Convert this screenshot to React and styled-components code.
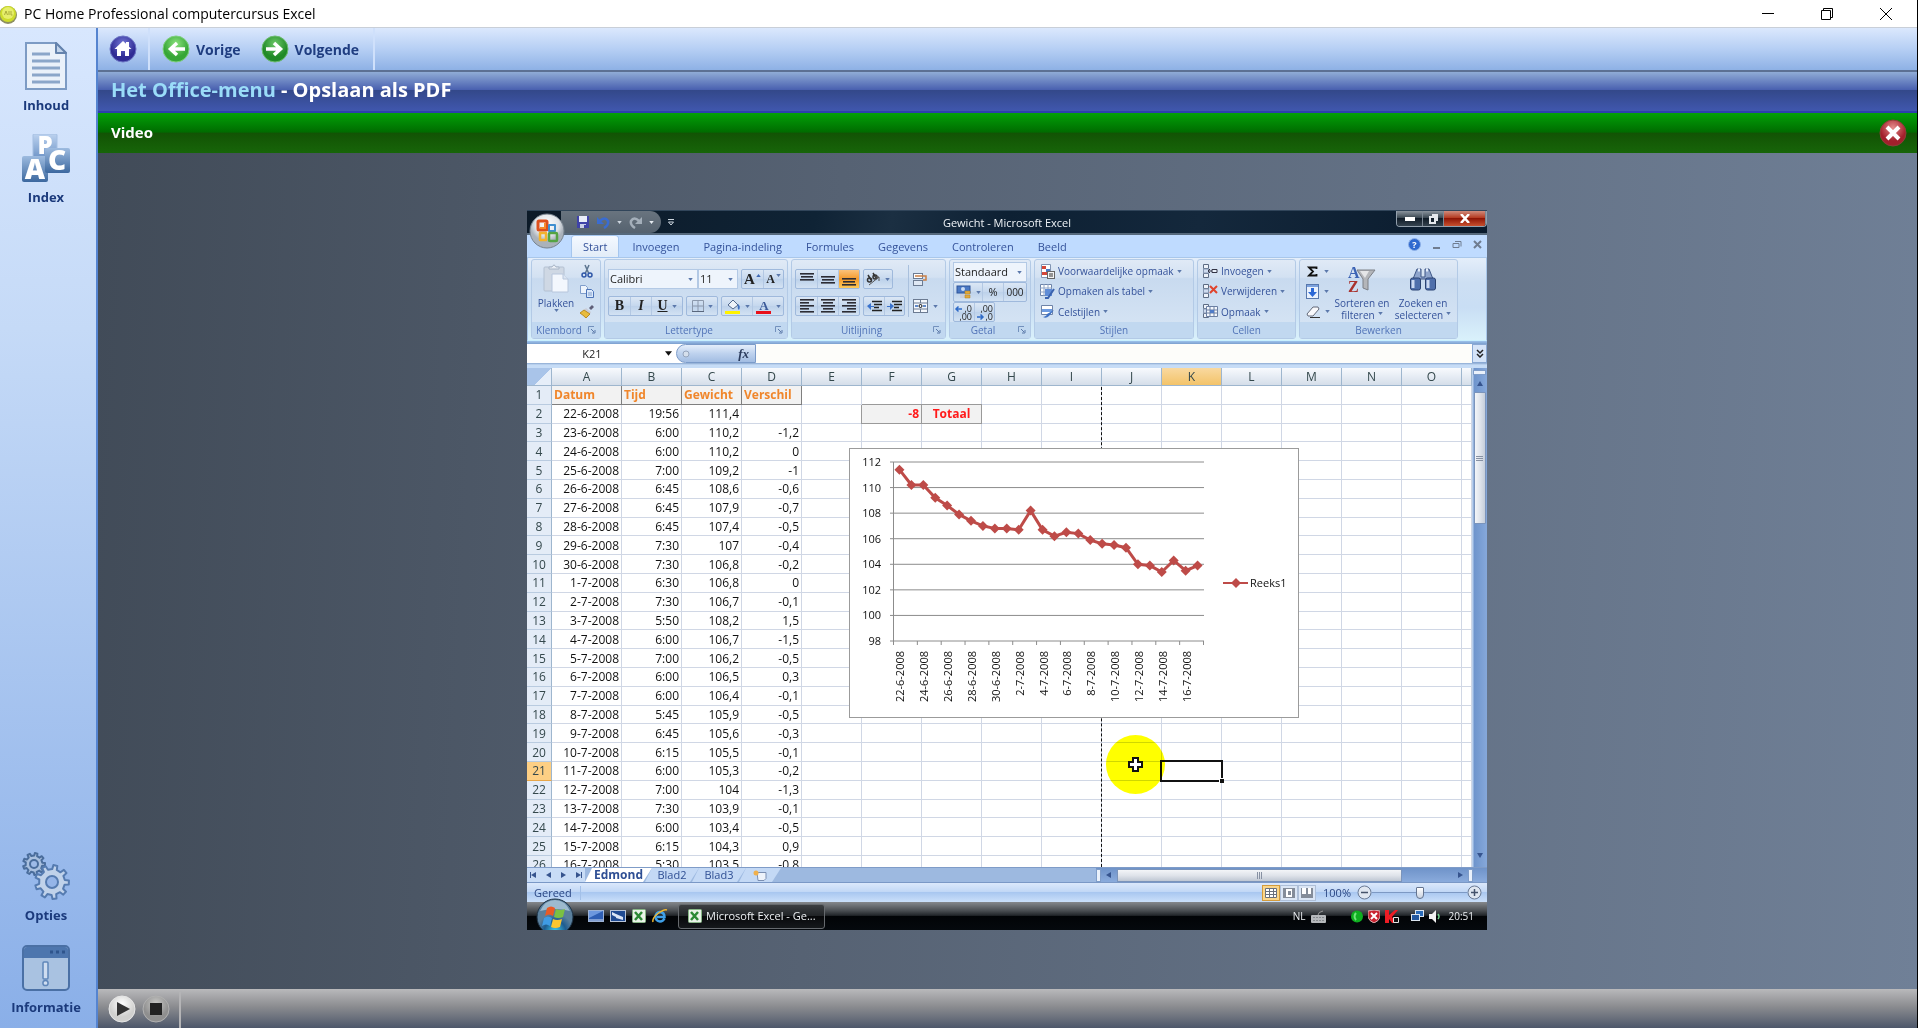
import React from 'react';
import styled, { createGlobalStyle, css } from 'styled-components';

const GlobalStyle = createGlobalStyle`
  *, *::before, *::after {
    box-sizing: border-box;
  }
  body {
    margin: 0;
    font-family: "Open Sans", "Noto Sans", sans-serif;
  }
  button, input, select {
    font: inherit;
    color: inherit;
    margin: 0;
    padding: 0;
    border: 0;
    background: none;
  }
  svg {
    display: block;
    flex: none;
  }
`;

/* ---------- course player ---------- */

const Shell = styled.div`
  min-height: 100vh;
  display: flex;
  flex-direction: column;
  border-right: 1px solid #000;
  background: #fff;
`;

const TitleBar = styled.header`
  height: 28px;
  padding-right: 2px;
  display: flex;
  align-items: center;
  background: #fff;
  color: #000;
  border-bottom: 1px solid #c9cfd8;
`;

const AppTitle = styled.h1`
  flex: 1;
  margin: 0 0 0 6px;
  font-size: 14px;
  font-weight: 400;
  line-height: 20px;
`;

const WindowButton = styled.button`
  width: 59px;
  height: 27px;
  display: flex;
  align-items: center;
  justify-content: center;
`;

const Body = styled.div`
  flex: 1;
  display: flex;
`;

const Sidebar = styled.nav`
  width: 98px;
  padding: 14px 4px 12px 0;
  display: flex;
  flex-direction: column;
  justify-content: space-between;
  border-right: 2px solid #5584d0;
  background: linear-gradient(#d8e7fe, #c5daf7 30%, #8aafe8);
`;

const SideGroup = styled.div`
  display: flex;
  flex-direction: column;
  gap: 20px;
`;

const SideButton = styled.button`
  display: flex;
  flex-direction: column;
  align-items: center;
  gap: 6px;
  color: #1b3a7c;
  font-size: 13px;
  font-weight: 700;
  line-height: 18px;
`;

const Main = styled.main`
  flex: 1;
  min-width: 0;
  display: flex;
  flex-direction: column;
`;

const Toolbar = styled.div`
  height: 44px;
  display: flex;
  border-bottom: 2px solid #5c7093;
  background: linear-gradient(#dbe8fd, #b6cff4 50%, #8eb1e5);
`;

const ToolGroup = styled.div`
  display: flex;
  align-items: center;
  gap: 20px;
  padding: 0 ${p => p.$end}px 0 ${p => p.$start}px;
  border-right: 2px solid #cfe0fb;
`;

const ToolButton = styled.button`
  display: flex;
  align-items: center;
  gap: 6px;
  color: #1f3d80;
  font-size: 14px;
  font-weight: 700;
`;

const Heading = styled.h2`
  height: 41px;
  margin: 0;
  padding: 0 13px 4px;
  display: flex;
  align-items: center;
  font-size: 20px;
  font-weight: 700;
  white-space: pre;
  color: #fff;
  border-bottom: 2px solid #2c3fae;
  background: linear-gradient(#90acd6, #4a61b0 45%, #334889 46%, #4057ae);

  span {
    color: #9adcf8;
  }
`;

const VideoBar = styled.div`
  height: 40px;
  padding: 0 10px 0 13px;
  display: flex;
  align-items: center;
  justify-content: space-between;
  color: #fff;
  background: linear-gradient(#02a108, #006c00 48%, #125304 50%, #176509);
`;

const VideoTitle = styled.h3`
  margin: 0;
  padding-bottom: 2px;
  font-size: 15px;
  font-weight: 700;
`;

const Stage = styled.section`
  flex: 1;
  padding: 0 1px 2px 0;
  display: flex;
  align-items: center;
  justify-content: center;
  background: linear-gradient(93deg, #414b58, #566273 40%, #708097);
`;

const PlayerBar = styled.footer`
  height: 39px;
  padding-left: 10px;
  display: flex;
  align-items: center;
  gap: 6px;
  background: linear-gradient(#b9b9bb, #8b8c90 45%, #4d576a);
`;

const PlayerDivider = styled.span`
  width: 2px;
  height: 36px;
  margin: 3px 0 0 3px;
  background: #b4b4b6;
`;

/* ---------- Excel window ---------- */

const Screen = styled.div`
  width: 960px;
  overflow: hidden;
  position: relative;
  background: #fff;
  font-size: 11px;
  line-height: 14px;
  font-weight: 500;
  color: #34529a;
`;

const ExcelTitle = styled.div`
  height: 25px;
  display: grid;
  grid-template-columns: 1fr auto 1fr;
  align-items: start;
  border-top: 1px solid #31455a;
  border-bottom: 2px solid #56697c;
  background: linear-gradient(100deg, #0c1a28, #0f2335 30%, #1b2f42 38%, #0d2033 50%, #14283c 70%, #0a1b2d);
`;

const QuickAccess = styled.div`
  display: flex;
  align-items: center;
  height: 22px;
  color: #dbe4ee;
`;

const QuickPill = styled.div`
  width: 100px;
  height: 22px;
  margin: 0 7px 0 34px;
  padding-left: 15px;
  display: flex;
  align-items: center;
  gap: 7px;
  border-radius: 0 11px 11px 0;
  background: linear-gradient(#69747f, #55626f);
`;

const ExcelName = styled.div`
  padding-top: 5px;
  font-size: 11px;
  color: #eef2f6;
`;

const WindowKeys = styled.div`
  justify-self: end;
  display: flex;
  border: 1px solid #93a0ad;
  border-top: 0;
  border-radius: 0 0 4px 4px;
  overflow: hidden;
`;

const WindowKey = styled.button`
  width: ${p => p.$w}px;
  height: 15px;
  display: flex;
  align-items: center;
  justify-content: center;
  border-right: 1px solid #7c8894;
  background: ${p => (p.$close
    ? 'linear-gradient(#d08b7b, #b53b22 45%, #8f1606 50%, #c8502f)'
    : 'linear-gradient(#8a949d, #3a4752 45%, #101c28 50%, #35434f)')};
`;

const OfficeButton = styled.button`
  position: absolute;
  left: 2px;
  top: 3px;
`;

const TabStrip = styled.div`
  height: 22px;
  padding-left: 45px;
  display: flex;
  align-items: flex-end;
  background: #bfdbff;
`;

const RibbonTab = styled.button`
  height: 21px;
  padding: 0 ${p => (p.$active ? 11 : 12)}px;
  margin-right: ${p => (p.$active ? 2 : 0)}px;
  border-radius: 3px 3px 0 0;
  ${p => p.$active && css`
    background: linear-gradient(#f4f9ff, #e2ecf8);
    box-shadow: 0 0 0 1px #a5c6ee;
  `}
`;

const TabTools = styled.div`
  flex: 1;
  height: 22px;
  padding: 0 5px 3px 0;
  display: flex;
  align-items: center;
  justify-content: flex-end;
  gap: 11px;

  button {
    display: flex;
  }
`;

const Ribbon = styled.div`
  height: 84px;
  padding: 1px 3px;
  display: flex;
  gap: 3px;
  border: 1px solid #a9c7ea;
  border-bottom-color: #c8f0ff;
  background: linear-gradient(#e4eefa, #cddff3 30%, #c9def4 60%, #d9f1fb);
  font-size: 10px;
`;

const Group = styled.section`
  width: ${p => p.$w}px;
  height: 80px;
  display: flex;
  flex-direction: column;
  border: 1px solid #b3cae6;
  border-radius: 3px;
  background: linear-gradient(#e0eaf6, #d3e1f2 22%, #c8daef 24%, #d8e6f5);
`;

const GroupBody = styled.div`
  flex: 1;
  min-height: 0;
  display: flex;
  padding: ${p => p.$pad};
  gap: ${p => p.$gap || 0}px;
`;

const GroupLabel = styled.div`
  height: 16px;
  padding: 0 4px;
  display: flex;
  align-items: center;
  gap: 6px;
  color: #5274b8;
  background: #c1d8f0;

  span {
    flex: 1;
    text-align: center;
  }
`;

const Stack = styled.div`
  display: flex;
  flex-direction: column;
  gap: ${p => p.$gap || 0}px;
`;

const Line = styled.div`
  display: flex;
  gap: ${p => p.$gap || 0}px;
`;

const BigButton = styled.button`
  width: ${p => p.$w}px;
  padding-top: ${p => p.$top || 0}px;
  display: flex;
  flex-direction: column;
  align-items: center;
  justify-content: flex-start;
  line-height: 12px;

  svg:first-child {
    margin-bottom: 4px;
  }
`;

const WithCaret = styled.span`
  display: flex;
  align-items: center;
  gap: 3px;
`;

const TextButton = styled.button`
  height: 21px;
  display: flex;
  align-items: center;
  gap: 3px;
  white-space: nowrap;
`;

const IconButton = styled.button`
  height: ${p => p.$h || 21}px;
  display: flex;
  align-items: center;
  gap: 5px;
`;

const KeyGroup = styled.div`
  height: 20px;
  display: flex;
  border: 1px solid #9fb9dc;
  border-radius: 2px;
  background: linear-gradient(#dbe7f5, #c6d8ee 48%, #bcd1ea 50%, #d3e2f3);
`;

const Key = styled.button`
  width: ${p => p.$w}px;
  display: flex;
  align-items: center;
  justify-content: center;
  gap: ${p => (p.$raised ? 1 : 4)}px;
  color: #222;
  font-family: ${p => (p.$serif ? '"Liberation Serif", serif' : 'inherit')};
  font-size: ${p => p.$size || 11}px;
  font-weight: ${p => (p.$bold ? 700 : 500)};
  font-style: ${p => (p.$italic ? 'italic' : 'normal')};
  background: ${p => (p.$on ? 'linear-gradient(#fbc27b, #f59a2c 50%, #fdc95a)' : 'none')};

  & + & {
    border-left: 1px solid #b3c8e3;
  }

  ${p => p.$raised && css`
    svg {
      align-self: flex-start;
      margin-top: 4px;
    }
  `}
`;

const ComboFrame = styled.span`
  width: ${p => p.$w}px;
  height: 20px;
  padding-right: 4px;
  display: flex;
  align-items: center;
  border: 1px solid #b3c9e5;
  background: #eef4fc;
  color: #1e1e1e;
  font-size: 11px;

  select {
    flex: 1;
    min-width: 0;
    padding-left: 1px;
    appearance: none;
    outline: none;
  }
`;

const Separator = styled.span`
  width: 1px;
  height: 52px;
  margin: -4px 4px 0 3px;
  background: #a9c0dd;
`;

const FormulaBar = styled.div`
  height: 27px;
  padding: 3px 0 5px;
  display: flex;
  background: linear-gradient(#9ec3ec, #7b9fce 3px, #fff 3px, #fff 22px, #8aa8d0 22px, #c6dcf6 24px);
`;

const NameBox = styled.label`
  width: 149px;
  padding: 0 4px 0 0;
  display: flex;
  align-items: center;
  background: #fff;
  color: #222;

  input {
    flex: 1;
    min-width: 0;
    height: 19px;
    padding-right: 8px;
    text-align: center;
    outline: none;
  }
`;

const FxPill = styled.div`
  width: 80px;
  padding: 0 6px 0 5px;
  display: flex;
  align-items: center;
  justify-content: space-between;
  border: 1px solid #7b9bc9;
  border-radius: 10px 0 0 10px;
  background: linear-gradient(#e4eefb, #bed2ee 50%, #a2bde2);
  color: #2b3c5d;
  font: italic 700 13px "Liberation Serif", serif;
`;

const FormulaInput = styled.input`
  flex: 1;
  min-width: 0;
  padding: 0 4px;
  background: #fdfdfa;
  outline: none;
`;

const ExpandButton = styled.button`
  width: 15px;
  display: flex;
  align-items: center;
  justify-content: center;
  border: 1px solid #8aa9d4;
  background: #d5e4f8;
`;

const SheetArea = styled.div`
  height: 499px;
  display: flex;
  overflow: hidden;
`;

const Canvas = styled.div`
  flex: 1;
  min-width: 0;
  position: relative;
  overflow: hidden;
`;

const Grid = styled.table`
  width: 945px;
  height: 507px;
  table-layout: fixed;
  border-collapse: separate;
  border-spacing: 0;
  color: #111;
  font-size: 12px;
  line-height: 17px;
`;

const ColumnHead = styled.th`
  padding: 0;
  font-weight: 500;
  color: #34484c;
  border-right: 1px solid #9eb6ce;
  border-bottom: 1px solid #9eb6ce;
  background: ${p => (p.$on
    ? 'linear-gradient(#f9d9a0, #f3c369)'
    : 'linear-gradient(#f8fafd, #e6ecf4 50%, #d5dee9)')};
`;

const Corner = styled.td`
  padding: 0;
  border-right: 1px solid #9eb6ce;
  border-bottom: 1px solid #9eb6ce;
  background: linear-gradient(135deg, #a9c4e9 60%, #e6eef9 61%);
`;

const RowHead = styled.th`
  padding: 0;
  font-weight: 500;
  color: #34484c;
  border-right: 1px solid #9eb6ce;
  border-bottom: 1px solid ${p => (p.$on ? '#e8a648' : '#b9cbe0')};
  background: ${p => (p.$on ? '#fdcf84' : '#e4ecf7')};
`;

const Cell = styled.td`
  padding: 0 2px;
  text-align: right;
  white-space: nowrap;
  border-right: 1px solid #d0d7e5;
  border-bottom: 1px solid #d0d7e5;
  background: #fff;
  ${p => p.$kind === 'title' && css`
    padding: 0 0 0 2px;
    text-align: left;
    font-weight: 700;
    color: #f0862b;
    background: #f2f2f2;
    border-color: #7f7f7f;
  `}
  ${p => p.$kind === 'total' && css`
    font-weight: 700;
    color: #ff1a1a;
    background: #f2f2f2;
    border-color: #9a9a9a;
    box-shadow: 0 -1px 0 #9a9a9a, -1px 0 0 #9a9a9a;
  `}
  ${p => p.$center && css`
    text-align: center;
  `}
`;

const PageBreak = styled.div`
  position: absolute;
  left: 574px;
  top: 19px;
  bottom: 0;
  border-left: 1px dashed #111;
`;

const ChartBox = styled.figure`
  position: absolute;
  left: 322px;
  top: 80px;
  margin: 0;
  border: 1px solid #9b9b9b;
  background: #fff;
`;

const Pointer = styled.div`
  position: absolute;
  left: 579px;
  top: 367px;
  width: 59px;
  height: 59px;
  border-radius: 50%;
  background: #ff0;
  mix-blend-mode: multiply;
`;

const PointerMark = styled.div`
  position: absolute;
  left: 600px;
  top: 388px;
`;

const Selection = styled.div`
  position: absolute;
  left: 633px;
  top: 392px;
  width: 63px;
  height: 22px;
  border: 2px solid #111;

  &::after {
    content: '';
    position: absolute;
    right: -3px;
    bottom: -3px;
    width: 5px;
    height: 5px;
    border: 1px solid #fff;
    border-width: 1px 0 0 1px;
    background: #111;
  }
`;

const ScrollColumn = styled.div`
  width: 15px;
  padding: 2px 1px 4px;
  display: flex;
  flex-direction: column;
  align-items: center;
  background: linear-gradient(90deg, #b9cfec 1px, #6e94cc 2px, #86a8da);
`;

const SplitKnob = styled.span`
  width: ${p => (p.$tall ? 5 : 13)}px;
  height: ${p => (p.$tall ? 13 : 5)}px;
  border: 1px solid #7f9dc9;
  background: #eaf1fb;
`;

const ScrollThumb = styled.div`
  width: 12px;
  height: 132px;
  margin-bottom: auto;
  display: flex;
  align-items: center;
  justify-content: center;
  border: 1px solid #7b94bb;
  border-radius: 1px;
  background: linear-gradient(90deg, #f3f5f8, #dfe4ec 50%, #c6ceda);
`;

const ScrollButton = styled.button`
  width: 12px;
  height: ${p => (p.$flat ? 14 : 17)}px;
  display: flex;
  align-items: center;
  justify-content: center;
`;

const SheetBar = styled.div`
  height: 16px;
  display: flex;
  border-top: 1px solid #7f9cc8;
  border-bottom: 1px solid #7a98c6;
  background: #9db9e0;
`;

const SheetNav = styled.div`
  width: 58px;
  display: flex;
  align-items: center;
  justify-content: space-around;
  background: #c8dcf6;

  button {
    display: flex;
  }
`;

const SheetTab = styled.button`
  height: 14px;
  width: ${p => p.$w}px;
  display: flex;
  align-items: center;
  justify-content: center;
  font-size: ${p => (p.$on ? 12 : 11)}px;
  line-height: 12px;
  font-weight: ${p => (p.$on ? 700 : 500)};
  color: #2f4f94;
  clip-path: polygon(7px 0, 100% 0, calc(100% - 9px) 100%, 0 100%);
  margin-right: -7px;
  background: ${p => (p.$on ? '#fff' : '#c4d9f5')};
`;

const HorizontalScroll = styled.div`
  flex: 1;
  margin-left: auto;
  max-width: 391px;
  display: flex;
  align-items: center;
  justify-content: space-between;
  background: linear-gradient(#6f93c9, #8aabdc);
`;

const HorizontalThumb = styled.div`
  width: 285px;
  height: 13px;
  margin-right: 50px;
  display: flex;
  align-items: center;
  justify-content: center;
  border: 1px solid #7b94bb;
  background: linear-gradient(#f3f5f8, #dfe3ea 50%, #bfc7d3);
`;

const StatusBar = styled.div`
  height: 19px;
  padding: 0 5px 0 7px;
  display: flex;
  align-items: center;
  color: #294582;
  background: linear-gradient(#dbe8fb, #c2d8f6 45%, #a9c7f0 50%, #cbe0fa);
`;

const StatusText = styled.span`
  margin-right: auto;
  padding-right: 8px;
  border-right: 1px solid #a3c0e8;
`;

const ViewKeys = styled.div`
  height: 16px;
  margin-right: 7px;
  display: flex;
`;

const ViewKey = styled.button`
  width: 18px;
  display: flex;
  align-items: center;
  justify-content: center;
  border: 1px solid ${p => (p.$on ? '#d39b3c' : '#aebfd8')};
  background: ${p => (p.$on ? '#fbd68a' : '#dbe6f5')};
`;

const ZoomRange = styled.input`
  width: 95px;
  height: 15px;
  appearance: none;
  background: linear-gradient(#7d99c4, #7d99c4) center / 100% 1px no-repeat;

  &::-webkit-slider-thumb {
    appearance: none;
    width: 8px;
    height: 12px;
    border: 1px solid #64748f;
    border-radius: 1px 1px 4px 4px;
    background: linear-gradient(#fff, #c9d2e0);
  }
`;

const TaskBar = styled.div`
  height: 28px;
  padding: 0 13px 0 61px;
  display: flex;
  align-items: center;
  color: #eef1f4;
  background: linear-gradient(#85888c, #4c5054 30%, #22262a 48%, #020406 50%, #05090d);
`;

const QuickLaunch = styled.div`
  width: 90px;
  display: flex;
  gap: 6px;

  button {
    display: flex;
  }
`;

const TaskButton = styled.button`
  width: 147px;
  height: 25px;
  padding-left: 9px;
  display: flex;
  align-items: center;
  gap: 4px;
  border: 1px solid #666a6e;
  border-radius: 3px;
  background: linear-gradient(#3c3f42, #202326 48%, #08090b 50%, #15181b);
`;

const Tray = styled.div`
  margin-left: auto;
  display: flex;
  align-items: center;
  gap: 5px;
  font-size: 10px;
`;

const TrayGap = styled.span`
  width: ${p => p.$w}px;
`;

const Clock = styled.time`
  margin-left: 3px;
`;

const StartOrb = styled.button`
  position: absolute;
  left: 9px;
  bottom: 0;
  height: 32px;
  overflow: hidden;
`;

/* ---------- data ---------- */

const columns = 'ABCDEFGHIJKLMNO'.split('');

const log = [
    ['22-6-2008', '19:56', '111,4', ''],
    ['23-6-2008', '6:00', '110,2', '-1,2'],
    ['24-6-2008', '6:00', '110,2', '0'],
    ['25-6-2008', '7:00', '109,2', '-1'],
    ['26-6-2008', '6:45', '108,6', '-0,6'],
    ['27-6-2008', '6:45', '107,9', '-0,7'],
    ['28-6-2008', '6:45', '107,4', '-0,5'],
    ['29-6-2008', '7:30', '107', '-0,4'],
    ['30-6-2008', '7:30', '106,8', '-0,2'],
    ['1-7-2008', '6:30', '106,8', '0'],
    ['2-7-2008', '7:30', '106,7', '-0,1'],
    ['3-7-2008', '5:50', '108,2', '1,5'],
    ['4-7-2008', '6:00', '106,7', '-1,5'],
    ['5-7-2008', '7:00', '106,2', '-0,5'],
    ['6-7-2008', '6:00', '106,5', '0,3'],
    ['7-7-2008', '6:00', '106,4', '-0,1'],
    ['8-7-2008', '5:45', '105,9', '-0,5'],
    ['9-7-2008', '6:45', '105,6', '-0,3'],
    ['10-7-2008', '6:15', '105,5', '-0,1'],
    ['11-7-2008', '6:00', '105,3', '-0,2'],
    ['12-7-2008', '7:00', '104', '-1,3'],
    ['13-7-2008', '7:30', '103,9', '-0,1'],
    ['14-7-2008', '6:00', '103,4', '-0,5'],
    ['15-7-2008', '6:15', '104,3', '0,9'],
    ['16-7-2008', '5:30', '103,5', '-0,8'],
];

// the last point belongs to the row below the visible ones
const weights = [...log.map(r => parseFloat(r[2].replace(',', '.'))), 103.9];

/* ---------- icons ---------- */

const Caret = ({ color = '#5b78ab', size = 5 }) => (
    <svg width={size} height={size - 2} viewBox="0 0 6 4"><path d="M0 0h6L3 4z" fill={color} /></svg>
);

const CaretUp = () => (
    <svg width="5" height="3" viewBox="0 0 6 4"><path d="M0 4h6L3 0z" fill="#3f69b5" /></svg>
);

const Launcher = () => (
    <svg width="8" height="8" viewBox="0 0 8 8">
        <path d="M.5 6V.5H6" fill="none" stroke="#7391bd" />
        <path d="M3 3l3 3M7 4v3H4" fill="none" stroke="#5b78a8" />
    </svg>
);

const AppIcon = () => (
    <svg width="18" height="20" viewBox="0 0 18 20">
        <ellipse cx="8" cy="11" rx="9" ry="9" fill="#8d8f62" />
        <circle cx="8" cy="10" r="8" fill="#cddc2c" />
        <circle cx="8" cy="9" r="6" fill="#e6ee6b" />
        <path d="M4.5 11l1.500-4 1.500 4M9 7v4M11 7v4h1.500" fill="none" stroke="#aaac3c" />
    </svg>
);

const ContentsIcon = () => (
    <svg width="48" height="48" viewBox="0 0 48 48">
        <path d="M4 1h30l10 10v36H4z" fill="#eaf1fa" stroke="#7d9bc4" strokeWidth="2" />
        <path d="M34 1v10h10z" fill="#c3d5ec" stroke="#6583ad" strokeWidth="2" strokeLinejoin="round" />
        <path d="M10 12h18M10 19h28M10 26h28M10 33h28M10 40h28" stroke="#8ba6c9" strokeWidth="3" />
    </svg>
);

const IndexIcon = () => (
    <svg width="48" height="48" viewBox="0 0 48 48" fontFamily="'Open Sans', sans-serif" fontWeight="800" textAnchor="middle" fill="#fff">
        <defs>
            <linearGradient id="tile" x2="0" y2="1"><stop offset="0" stopColor="#9dbbe0" /><stop offset="1" stopColor="#3c689f" /></linearGradient>
            <linearGradient id="tileLight" x2="0" y2="1"><stop offset="0" stopColor="#bcd2ef" /><stop offset="1" stopColor="#6f95c8" /></linearGradient>
        </defs>
        <rect x="11" y="0" width="24" height="24" rx="1" fill="url(#tileLight)" stroke="#a5bfe2" />
        <text x="23" y="20" fontSize="24">P</text>
        <rect x="0" y="22" width="26" height="26" rx="2" fill="url(#tile)" />
        <text x="13" y="45" fontSize="28">A</text>
        <rect x="23" y="14" width="25" height="25" rx="2" fill="url(#tile)" />
        <text x="35" y="36" fontSize="28">C</text>
    </svg>
);

// outline of a cog with n teeth round (cx, cy)
const cog = (cx, cy, r, n) => {
    const pts = [];
    for (let i = 0; i < n; i++) {
        [[-0.26, 0.76], [-0.17, 1], [0.17, 1], [0.26, 0.76]].forEach(([a, k]) => {
            const t = ((i + a) / n) * Math.PI * 2 + 0.2;
            pts.push(`${(cx + Math.sin(t) * r * k).toFixed(1)},${(cy - Math.cos(t) * r * k).toFixed(1)}`);
        });
    }
    return pts.join(' ');
};

const OptionsIcon = () => (
    <svg width="48" height="48" viewBox="0 0 48 48" strokeLinejoin="round">
        <polygon points={cog(12, 12, 11, 9)} fill="#a9c0df" stroke="#4a6d9c" strokeWidth="2" />
        <circle cx="12" cy="12" r="4" fill="#9ebbe8" stroke="#4a6d9c" strokeWidth="2" />
        <polygon points={cog(30, 30, 17, 9)} fill="#c0d2ea" stroke="#557bb0" strokeWidth="2" />
        <circle cx="30" cy="30" r="6" fill="#95b5e8" stroke="#557bb0" strokeWidth="2" />
    </svg>
);

const InfoIcon = () => (
    <svg width="48" height="48" viewBox="0 0 48 48">
        <rect x="1" y="2" width="46" height="44" rx="4" fill="#a9c2e1" stroke="#4a70a5" strokeWidth="2" />
        <path d="M2 14V6q0-3 3-3h38q3 0 3 3v8z" fill="#4d76ae" />
        <path d="M28 8h3M34 8h3M40 8h3" stroke="#2f558c" strokeWidth="3" />
        <rect x="21" y="18" width="5" height="17" rx="1" fill="#cfddf0" stroke="#5f86b9" strokeWidth="1.5" />
        <circle cx="23.5" cy="39" r="2.6" fill="#cfddf0" stroke="#5f86b9" strokeWidth="1.5" />
    </svg>
);

const RoundIcon = ({ from, to, ring, children }) => (
    <svg width="28" height="28" viewBox="0 0 28 28">
        <defs>
            <radialGradient id={`r${to.slice(1)}`} cy="0.3"><stop offset="0" stopColor={from} /><stop offset="1" stopColor={to} /></radialGradient>
        </defs>
        <circle cx="14" cy="14" r="13" fill={`url(#r${to.slice(1)})`} stroke={ring} />
        {children}
    </svg>
);

const HomeIcon = () => (
    <RoundIcon from="#7479d6" to="#302c95" ring="#6b74c4">
        <path d="M5.5 14L14 6l3 2.800V7h3v4.700l2.500 2.300h-2.500v7h-4v-5h-4v5H8v-7z" fill="#fff" />
    </RoundIcon>
);

const PrevIcon = () => (
    <RoundIcon from="#8be27d" to="#36a637" ring="#7ecf7c">
        <path d="M15 8l-6.500 6 6.500 6M9 14h14" fill="none" stroke="#fff" strokeWidth="3.5" />
    </RoundIcon>
);

const NextIcon = () => (
    <RoundIcon from="#6cc868" to="#218a28" ring="#6dbb6e">
        <path d="M13 8l6.500 6-6.500 6M19 14H5" fill="none" stroke="#fff" strokeWidth="3.5" />
    </RoundIcon>
);

const CloseIcon = () => (
    <RoundIcon from="#e58c8c" to="#a3202c" ring="#8c4038">
        <path d="M8 8l12 12M20 8L8 20" stroke="#fff" strokeWidth="4" />
    </RoundIcon>
);

const PlayIcon = () => (
    <RoundIcon from="#ffffff" to="#d0d0ce" ring="#e6e6e6">
        <path d="M9 7l13 7-13 7z" fill="#333" />
    </RoundIcon>
);

const StopIcon = () => (
    <RoundIcon from="#c9c9c7" to="#8f8f8f" ring="#b1b1b1">
        <rect x="8" y="8" width="12" height="12" fill="#222" />
    </RoundIcon>
);

const OfficeIcon = () => (
    <svg width="36" height="36" viewBox="0 0 36 36">
        <defs>
            <radialGradient id="orbWhite" cy="0.3"><stop offset="0" stopColor="#fff" /><stop offset=".7" stopColor="#dfe3e8" /><stop offset="1" stopColor="#aab2bb" /></radialGradient>
        </defs>
        <circle cx="18" cy="18" r="17" fill="url(#orbWhite)" stroke="#76828e" />
        <g fill="none" strokeWidth="3" strokeLinejoin="round">
            <rect x="9" y="8" width="9" height="9" rx="1" stroke="#dd4f1d" />
            <rect x="20" y="12" width="6" height="6" stroke="#3f8fd0" strokeWidth="2" />
            <rect x="11" y="20" width="6" height="7" stroke="#f3b22c" strokeWidth="2.5" />
            <rect x="20" y="20" width="8" height="8" rx="1" stroke="#55a443" strokeWidth="2.5" />
        </g>
        <path d="M16 10v5h-5" stroke="#f58a2c" strokeWidth="2" fill="none" />
    </svg>
);

const SaveIcon = () => (
    <svg width="14" height="14" viewBox="0 0 14 14">
        <path d="M1 1h12v12H1z" fill="#3f43a8" />
        <path d="M3 1h8v6H3z" fill="#e9edf8" />
        <path d="M4 9h6v4H4z" fill="#c9cfe8" />
        <path d="M8 10h2v3H8z" fill="#3f43a8" />
    </svg>
);

const UndoIcon = ({ flip, color }) => (
    <svg width="13" height="13" viewBox="0 0 13 13">
        <g transform={flip ? 'translate(13 0) scale(-1 1)' : undefined}>
            <path d="M3 5q5-5 8 0 1 4-4 7" fill="none" stroke={color} strokeWidth="2.5" />
            <path d="M0 1v7h7z" fill={color} />
        </g>
    </svg>
);

const PasteIcon = () => (
    <svg width="26" height="29" viewBox="0 0 26 29">
        <rect x="1" y="3" width="20" height="24" rx="1" fill="#cfd8e4" stroke="#b4c1d2" />
        <path d="M6 5V3h3q2-4 4 0h3v2z" fill="#e9eef5" stroke="#a7b4c6" />
        <path d="M9 10h11l5 5v13H9z" fill="#f3f7fd" stroke="#b7c6dc" />
        <path d="M20 10v5h5" fill="#dbe5f2" stroke="#b7c6dc" />
    </svg>
);

const CutIcon = () => (
    <svg width="14" height="14" viewBox="0 0 14 14" fill="none">
        <path d="M5 1l4 9M9 1L5 10" stroke="#5c7590" strokeWidth="1.5" />
        <circle cx="4" cy="11" r="2" stroke="#2f57a8" strokeWidth="1.5" />
        <circle cx="10" cy="11" r="2" stroke="#2f57a8" strokeWidth="1.5" />
    </svg>
);

const CopyIcon = () => (
    <svg width="14" height="13" viewBox="0 0 14 13">
        <path d="M.5.5h5l2 2v6h-7z" fill="#eef4fc" stroke="#7f9dcb" />
        <path d="M6.5 4.5h5l2 2v6h-7z" fill="#dbe8fa" stroke="#4c74b8" />
        <path d="M8 8h4M8 10h4" stroke="#7f9dcb" />
    </svg>
);

const BrushIcon = () => (
    <svg width="14" height="14" viewBox="0 0 14 14">
        <path d="M9 4l3-3 2 2-3 3z" fill="#5f5f78" />
        <path d="M6 4l5 4-1 2-6-4z" fill="#c9cbd6" />
        <path d="M4 6l6 4-4 4Q3 11 0 9z" fill="#e8bb3c" stroke="#b98a22" />
    </svg>
);

const BordersIcon = () => (
    <svg width="12" height="12" viewBox="0 0 12 12" fill="none">
        <path d="M.5.5h11v11H.5zM6 .5v11M.5 6h11" stroke="#8b98ac" />
        <path d="M0 11.5h12" stroke="#59677d" />
    </svg>
);

const FillIcon = () => (
    <svg width="16" height="15" viewBox="0 0 16 15">
        <path d="M3 6l5-5 5 5-5 4z" fill="#eef3fa" stroke="#52698d" />
        <path d="M13 5q3 2 1 6-2-1-1-6z" fill="#3c6fc0" />
        <rect y="12" width="15" height="3" fill="#fff200" />
    </svg>
);

const FontColorIcon = () => (
    <svg width="16" height="15" viewBox="0 0 16 15">
        <text x="8" y="11" fontSize="13" fontWeight="700" textAnchor="middle" fill="#3b5a99" fontFamily="'Liberation Serif', serif">A</text>
        <rect y="12" width="15" height="3" fill="#e8101a" />
    </svg>
);

const LinesIcon = ({ rows }) => (
    <svg width="14" height="14" viewBox="0 0 14 14">
        {rows.map(([y, x, w]) => <rect key={y} x={x} y={y} width={w} height="1.6" fill="#2c2c34" />)}
    </svg>
);

const AngleIcon = () => (
    <svg width="15" height="14" viewBox="0 0 15 14">
        <path d="M2 3l3 5M7 1l3 5" stroke="#333" strokeWidth="1.5" />
        <circle cx="3.5" cy="8" r="2" fill="none" stroke="#333" strokeWidth="1.5" />
        <circle cx="9" cy="5" r="2" fill="none" stroke="#333" strokeWidth="1.5" />
        <path d="M3 13L13 5M13 5v4M13 5H9" stroke="#555" fill="none" />
    </svg>
);

const IndentIcon = ({ right }) => (
    <svg width="15" height="13" viewBox="0 0 15 13">
        <path d="M5 1.5h10M7 4.5h8M7 7.5h5M5 10.5h10" stroke="#222" strokeWidth="1.5" />
        <path d={right ? 'M0 6h3V3l4 3-4 4V7H0z' : 'M7 6H4V3L0 6l4 4V7h3z'} fill="#3a73cd" />
    </svg>
);

const WrapIcon = () => (
    <svg width="15" height="15" viewBox="0 0 15 15">
        <rect x=".5" y="1.5" width="9" height="5" fill="#fff" stroke="#6c7b92" />
        <rect x=".5" y="8.5" width="9" height="5" fill="#dfe8f4" stroke="#6c7b92" />
        <path d="M2 4h11v4h-3" fill="none" stroke="#c97f45" strokeWidth="1.5" />
    </svg>
);

const MergeIcon = () => (
    <svg width="15" height="14" viewBox="0 0 15 14">
        <rect x=".5" y=".5" width="14" height="13" fill="#f4f8fd" stroke="#6c7b92" />
        <path d="M.5 4h14M.5 10h14M7.5 0v4M7.5 10v4" stroke="#6c7b92" />
        <path d="M2 7h3M10 7h3" stroke="#2f64b8" strokeWidth="1.5" />
        <circle cx="7.5" cy="7" r="1.5" fill="none" stroke="#111" />
    </svg>
);

const MoneyIcon = () => (
    <svg width="16" height="14" viewBox="0 0 16 14">
        <rect x="1" y="1" width="13" height="7" fill="#4a78c4" stroke="#2e549a" />
        <circle cx="7" cy="4" r="2" fill="#c9dcf6" />
        <path d="M4 9h6v4H4z" fill="#c9cedb" />
        <path d="M9 6h5v3H9zM9 10h5v3H9z" fill="#e2a93b" stroke="#b07c1e" strokeWidth=".5" />
    </svg>
);

const DecimalIcon = ({ top, bottom, left }) => (
    <svg width="18" height="17" viewBox="0 0 18 17" fontSize="9" fill="#222" overflow="visible">
        <text x="17" y="8" textAnchor="end">{top}</text>
        <text x="17" y="16" textAnchor="end">{bottom}</text>
        <path d={left ? 'M7 5H1M3.5 2.5L1 5l2.500 2.500' : 'M1 13h6M4.5 10.5L7 13l-2.500 2.500'} stroke="#2f6bc8" strokeWidth="1.5" fill="none" />
    </svg>
);

const ConditionIcon = () => (
    <svg width="15" height="15" viewBox="0 0 15 15">
        <path d="M1.5.5h9v13h-9z" fill="#fff" stroke="#8194b3" />
        <path d="M2 2h4v3H2zM2 8h5v3H2z" fill="#d4473a" />
        <path d="M6 5h4v3H6z" fill="#4b79c5" />
        <rect x="7.5" y="7.5" width="7" height="7" fill="#f4f4f4" stroke="#666" />
        <path d="M9 10h4M9 12h4" stroke="#333" />
    </svg>
);

const TableIcon = () => (
    <svg width="15" height="15" viewBox="0 0 15 15">
        <path d="M.5.5h11v11H.5z" fill="#fff" stroke="#6d83a8" />
        <path d="M0 4h12M0 8h12M4 0v12M8 0v12" stroke="#8fa4c6" />
        <path d="M5 5h7v7H5z" fill="#5f8cd6" />
        <path d="M14 5L8 14 5 14" stroke="#3b63ae" strokeWidth="2" fill="none" />
    </svg>
);

const StylesIcon = () => (
    <svg width="15" height="15" viewBox="0 0 15 15">
        <path d="M1.5 1.5h11v9h-11z" fill="#fff" stroke="#6d83a8" />
        <path d="M2 5h10v3H2z" fill="#6d9be0" />
        <path d="M14 6L9 12q-3 3-6 1 4-1 4-3z" fill="#3d70c4" />
    </svg>
);

const CellsIcon = ({ kind }) => (
    <svg width="15" height="15" viewBox="0 0 15 15">
        <path d="M.5.5h5v4h-5zM.5 9.5h5v4h-5z" fill="#eef3fa" stroke="#5d6c84" />
        <path d="M.5 5h5v4h-5z" fill="#cfdcf0" stroke="#8798b3" />
        {kind === 'insert' && <path d="M9 5.5h5v3H9z" fill="#e9f0fa" stroke="#334" />}
        {kind === 'insert' && <path d="M5 7h4M7 5L5 7l2 2" fill="none" stroke="#334" />}
        {kind === 'delete' && <path d="M7 2l7 7M14 2L7 9" stroke="#e0432c" strokeWidth="2" />}
        {kind === 'format' && <path d="M3.5 2.5h11v10h-11zM3 6h11M3 9h11M7 3v9M11 3v9" fill="#f4f8fd" stroke="#6b7fa2" />}
        {kind === 'format' && <path d="M7 6h4v3H7z" fill="#4f7cc8" />}
    </svg>
);

const SumIcon = () => (
    <svg width="13" height="13" viewBox="0 0 13 13">
        <path d="M10.5 4V2.5H3L7 6.5 3 10.5h7.500V9" fill="none" stroke="#111" strokeWidth="1.8" />
    </svg>
);

const DownIcon = () => (
    <svg width="13" height="15" viewBox="0 0 13 15">
        <rect x=".5" y=".5" width="12" height="14" fill="#eaf2fd" stroke="#5878ad" />
        <path d="M1 1h11v2H1z" fill="#7da2dd" />
        <path d="M5 4h3v4h3l-4.500 5L2 8h3z" fill="#2b68d6" />
    </svg>
);

const EraserIcon = () => (
    <svg width="14" height="12" viewBox="0 0 14 12">
        <path d="M1 8l6-7h5l1 2-6 7H2z" fill="#f8f8fb" stroke="#646b7a" />
        <path d="M4 11.5h10" stroke="#333" />
    </svg>
);

const SortIcon = () => (
    <svg width="28" height="28" viewBox="0 0 28 28" fontFamily="'Liberation Serif', serif" fontWeight="700">
        <path d="M9 5h18l-7 9v11l-5-2v-9z" fill="#b4b6ba" stroke="#7d8087" />
        <path d="M12 6h9l-4 7z" fill="#e5e6e8" />
        <text x="0" y="13" fontSize="16" fill="#3c63b4">A</text>
        <text x="0" y="27" fontSize="16" fill="#a9322e">Z</text>
    </svg>
);

const FindIcon = () => (
    <svg width="28" height="28" viewBox="0 0 28 28">
        <path d="M8 4h4v8h4V4h4l4 10H4z" fill="#8fa5cc" stroke="#3e5686" />
        <rect x="1.5" y="13" width="10" height="12" rx="2" fill="#4f6fab" stroke="#2b4373" />
        <rect x="16.5" y="13" width="10" height="12" rx="2" fill="#4f6fab" stroke="#2b4373" />
        <path d="M4 15v8M19 15v8" stroke="#cbd9f1" strokeWidth="3" />
        <path d="M9 5h2M17 5h2" stroke="#e3ecfa" strokeWidth="3" />
    </svg>
);

const HelpIcon = () => (
    <svg width="13" height="13" viewBox="0 0 13 13">
        <circle cx="6.5" cy="6.5" r="6" fill="#2f69cf" stroke="#8fb1e6" />
        <text x="6.5" y="10" fontSize="9" fontWeight="700" textAnchor="middle" fill="#fff">?</text>
    </svg>
);

const ExcelIcon = () => (
    <svg width="14" height="14" viewBox="0 0 14 14">
        <rect x=".5" y=".5" width="13" height="13" rx="1" fill="#e9f3e8" stroke="#86b585" />
        <path d="M3 3l7 8M10 3L3 11" stroke="#2c8a35" strokeWidth="2.5" />
    </svg>
);

const DesktopIcon = () => (
    <svg width="16" height="14" viewBox="0 0 16 14">
        <rect x=".5" y="1.5" width="15" height="11" fill="#2f5fb4" stroke="#9db3d6" />
        <path d="M1 2h14L1 9z" fill="#6d98de" />
        <path d="M1 11h14" stroke="#d5dfef" />
    </svg>
);

const SwitchIcon = () => (
    <svg width="16" height="14" viewBox="0 0 16 14">
        <rect x=".5" y="1.5" width="15" height="11" fill="#1f4b93" stroke="#b9c6da" />
        <path d="M2 3l6 3v3L2 6zM6 5l7 3v3L6 9z" fill="#dbe6f7" />
    </svg>
);

const BrowserIcon = () => (
    <svg width="16" height="15" viewBox="0 0 16 15">
        <path d="M12.5 9.5q-1.500 3-4.500 3-4.500-.5-4.500-5 .5-4 4.500-4.500 4.500.5 4.500 5H5" fill="none" stroke="#3fa0e8" strokeWidth="2.5" />
        <path d="M1 13Q0 9 6 4.500T15 1" fill="none" stroke="#f0b830" strokeWidth="1.5" />
    </svg>
);

const StartIcon = () => (
    <svg width="38" height="38" viewBox="0 0 38 38">
        <defs>
            <radialGradient id="startOrb" cy="0.9"><stop offset="0" stopColor="#3fd0f0" /><stop offset=".6" stopColor="#1d5c90" /><stop offset="1" stopColor="#5a7f9c" /></radialGradient>
        </defs>
        <circle cx="19" cy="19" r="18" fill="url(#startOrb)" stroke="#1c3144" />
        <path d="M4 13Q9 2 19 2t15 11q-15-4-30 0z" fill="#b9d3e4" opacity=".7" />
        <path d="M11 10q4-3 8 0l-2 8q-4-3-8 0z" fill="#ea5a24" />
        <path d="M20 11q4 2 9 0l-2 8q-5 2-9 0z" fill="#7bc142" />
        <path d="M8 20q4-3 8 0l-2 8q-4-3-8 0z" fill="#3f9be4" />
        <path d="M17 21q4 2 9 0l-2 8q-5 2-9 0z" fill="#fbc62f" />
    </svg>
);

const PlusPointer = () => (
    <svg width="17" height="17" viewBox="0 0 17 17">
        <path d="M6 2h5v4h4v5h-4v4H6v-4H2V6h4z" fill="#fff" stroke="#111" strokeWidth="2" />
    </svg>
);

const Grip = ({ upright }) => (
    <svg width="7" height="7" viewBox="0 0 7 7">
        <path d={upright ? 'M0 1.5h7M0 3.5h7M0 5.5h7' : 'M1.5 0v7M3.5 0v7M5.5 0v7'} stroke="#8791a3" />
    </svg>
);

const Arrow = ({ turn = 0, bar }) => (
    <svg width="8" height="8" viewBox="0 0 8 8">
        <g transform={`rotate(${turn} 4 4)`} fill="#36548e">
            <path d="M1 6h6L4 1z" />
            {bar && <path d="M1 0h6v1H1z" />}
        </g>
    </svg>
);

const ZoomSign = ({ plus }) => (
    <svg width="15" height="15" viewBox="0 0 15 15">
        <circle cx="7.5" cy="7.5" r="6.5" fill="#dfe6f0" stroke="#6a7a94" />
        <path d={plus ? 'M4 7.5h7M7.5 4v7' : 'M4 7.5h7'} stroke="#45536b" strokeWidth="1.5" />
    </svg>
);

/* ---------- chart ---------- */

const px = i => 43.5 + (i + 0.5) * (310 / 26);
const py = v => 192 - ((v - 98) / 14) * 179;

const Diamond = ({ x, y }) => (
    <path d={`M${x - 5} ${y}L${x} ${y - 5}L${x + 5} ${y}L${x} ${y + 5}z`} fill="#be4b48" />
);

const WeightChart = () => (
    <svg width="448" height="268" viewBox="0 0 448 268" role="img" aria-label="Reeks1" fontSize="11" fill="#111">
        {[98, 100, 102, 104, 106, 108, 110, 112].map(v => (
            <g key={v}>
                <path d={`M40 ${py(v)}H354`} stroke="#8c8c8c" />
                <text x="31" y={py(v) + 4} textAnchor="end">{v}</text>
            </g>
        ))}
        <path d="M43.5 13v179" stroke="#8c8c8c" />
        {Array.from({ length: 14 }, (_, i) => (
            <path key={i} d={`M${43.5 + i * (310 / 13)} 192v4`} stroke="#8c8c8c" />
        ))}
        {log.filter((_, i) => i % 2 === 0).map((r, i) => (
            <text key={r[0]} textAnchor="end" transform={`translate(${px(i * 2) + 5} 202) rotate(-90)`}>{r[0]}</text>
        ))}
        <polyline points={weights.map((v, i) => `${px(i)},${py(v)}`).join(' ')} fill="none" stroke="#be4b48" strokeWidth="3" />
        {weights.map((v, i) => <Diamond key={i} x={px(i)} y={py(v)} />)}
        <path d="M373 134h25" stroke="#be4b48" strokeWidth="2" />
        <Diamond x={386} y={134} />
        <text x="400" y="138">Reeks1</text>
    </svg>
);

/* ---------- parts ---------- */

const Combo = ({ w, label, value }) => (
    <ComboFrame $w={w}>
        <select aria-label={label} defaultValue={value}>
            <option>{value}</option>
        </select>
        <Caret />
    </ComboFrame>
);

const RibbonGroup = ({ w, label, pad, gap, launcher, children }) => (
    <Group $w={w}>
        <GroupBody $pad={pad} $gap={gap}>{children}</GroupBody>
        <GroupLabel>
            <span>{label}</span>
            {launcher && <Launcher />}
        </GroupLabel>
    </Group>
);

const Command = ({ icon, children }) => (
    <TextButton>{icon}{children}<Caret /></TextButton>
);

const align = {
    top: [[1, 0, 14], [4, 1, 12], [7, 0, 14]],
    middle: [[4, 0, 14], [7, 1, 12], [10, 0, 14]],
    bottom: [[6, 0, 14], [9, 1, 12], [12, 0, 14]],
    left: [[0, 0, 14], [3, 0, 9], [6, 0, 14], [9, 0, 9], [12, 0, 14]],
    center: [[0, 0, 14], [3, 2, 10], [6, 0, 14], [9, 2, 10], [12, 0, 14]],
    right: [[0, 0, 14], [3, 5, 9], [6, 0, 14], [9, 5, 9], [12, 0, 14]],
};

const ExcelRibbon = () => (
    <Ribbon>
        <RibbonGroup w={70} label="Klembord" launcher pad="4px 3px 0" gap={3}>
            <BigButton $w={42}><PasteIcon />Plakken<WithCaret><Caret /></WithCaret></BigButton>
            <Stack $gap={6}>
                <IconButton $h={14} aria-label="Knippen"><CutIcon /></IconButton>
                <IconButton $h={14} aria-label="Kopiëren"><CopyIcon /></IconButton>
                <IconButton $h={14} aria-label="Opmaak kopiëren"><BrushIcon /></IconButton>
            </Stack>
        </RibbonGroup>
        <RibbonGroup w={184} label="Lettertype" launcher pad="9px 3px 0">
            <Stack $gap={7}>
                <Line $gap={3}>
                    <Line>
                        <Combo w={90} label="Lettertype" value="Calibri" />
                        <Combo w={40} label="Tekengrootte" value="11" />
                    </Line>
                    <KeyGroup>
                        <Key $w={21} $serif $bold $raised $size={15}>A<CaretUp /></Key>
                        <Key $w={20} $serif $bold $raised $size={12}>A<Caret /></Key>
                    </KeyGroup>
                </Line>
                <Line $gap={3}>
                    <KeyGroup>
                        <Key $w={21} $serif $bold $size={14}>B</Key>
                        <Key $w={21} $serif $bold $italic $size={14}>I</Key>
                        <Key $w={31} $serif $bold $size={14}><u>U</u><Caret /></Key>
                    </KeyGroup>
                    <KeyGroup>
                        <Key $w={30} aria-label="Randen"><BordersIcon /><Caret /></Key>
                    </KeyGroup>
                    <KeyGroup>
                        <Key $w={30} aria-label="Opvulkleur"><FillIcon /><Caret /></Key>
                        <Key $w={31} aria-label="Tekstkleur"><FontColorIcon /><Caret /></Key>
                    </KeyGroup>
                </Line>
            </Stack>
        </RibbonGroup>
        <RibbonGroup w={155} label="Uitlijning" launcher pad="9px 3px 0">
            <Stack $gap={7}>
                <Line $gap={3}>
                    <KeyGroup>
                        <Key $w={21} aria-label="Boven uitlijnen"><LinesIcon rows={align.top} /></Key>
                        <Key $w={21} aria-label="Centreren"><LinesIcon rows={align.middle} /></Key>
                        <Key $w={21} $on aria-label="Onder uitlijnen"><LinesIcon rows={align.bottom} /></Key>
                    </KeyGroup>
                    <KeyGroup>
                        <Key $w={28} aria-label="Afdrukstand"><AngleIcon /><Caret /></Key>
                    </KeyGroup>
                </Line>
                <Line $gap={3}>
                    <KeyGroup>
                        <Key $w={21} aria-label="Links"><LinesIcon rows={align.left} /></Key>
                        <Key $w={21} aria-label="Midden"><LinesIcon rows={align.center} /></Key>
                        <Key $w={21} aria-label="Rechts"><LinesIcon rows={align.right} /></Key>
                    </KeyGroup>
                    <KeyGroup>
                        <Key $w={20} aria-label="Inspringing verkleinen"><IndentIcon /></Key>
                        <Key $w={20} aria-label="Inspringing vergroten"><IndentIcon right /></Key>
                    </KeyGroup>
                </Line>
            </Stack>
            <Separator />
            <Stack $gap={7}>
                <IconButton $h={20} aria-label="Terugloop"><WrapIcon /></IconButton>
                <IconButton $h={20} aria-label="Samenvoegen"><MergeIcon /><Caret /></IconButton>
            </Stack>
        </RibbonGroup>
        <RibbonGroup w={82} label="Getal" launcher pad="2px 3px 0">
            <Stack>
                <Combo w={74} label="Getalnotatie" value="Standaard" />
                <KeyGroup>
                    <Key $w={28} aria-label="Valuta"><MoneyIcon /><Caret /></Key>
                    <Key $w={21}>%</Key>
                    <Key $w={23} $size={10}>000</Key>
                </KeyGroup>
                <Line>
                    <KeyGroup>
                        <Key $w={20} aria-label="Meer decimalen"><DecimalIcon top=",0" bottom=",00" left /></Key>
                        <Key $w={20} aria-label="Minder decimalen"><DecimalIcon top=",00" bottom=",0" /></Key>
                    </KeyGroup>
                </Line>
            </Stack>
        </RibbonGroup>
        <RibbonGroup w={160} label="Stijlen" pad="1px 5px 0">
            <Stack>
                <Command icon={<ConditionIcon />}>Voorwaardelijke opmaak</Command>
                <Command icon={<TableIcon />}>Opmaken als tabel</Command>
                <Command icon={<StylesIcon />}>Celstijlen</Command>
            </Stack>
        </RibbonGroup>
        <RibbonGroup w={99} label="Cellen" pad="1px 5px 0">
            <Stack>
                <Command icon={<CellsIcon kind="insert" />}>Invoegen</Command>
                <Command icon={<CellsIcon kind="delete" />}>Verwijderen</Command>
                <Command icon={<CellsIcon kind="format" />}>Opmaak</Command>
            </Stack>
        </RibbonGroup>
        <RibbonGroup w={159} label="Bewerken" pad="1px 6px 0" gap={2}>
            <Stack>
                <IconButton aria-label="Som"><SumIcon /><Caret /></IconButton>
                <IconButton aria-label="Doorvoeren"><DownIcon /><Caret /></IconButton>
                <IconButton aria-label="Wissen"><EraserIcon /><Caret /></IconButton>
            </Stack>
            <Line $gap={2}>
                <BigButton $w={60} $top={4}><SortIcon />Sorteren en<WithCaret>filteren<Caret /></WithCaret></BigButton>
                <BigButton $w={58} $top={4}><FindIcon />Zoeken en<WithCaret>selecteren<Caret /></WithCaret></BigButton>
            </Line>
        </RibbonGroup>
    </Ribbon>
);

const cellFor = (row, col) => {
    if (row === 1) {
        const title = ['Datum', 'Tijd', 'Gewicht', 'Verschil'][col];
        return title ? <Cell key={col} $kind="title">{title}</Cell> : <Cell key={col} />;
    }
    if (row === 2 && col === 5) return <Cell key={col} $kind="total">-8</Cell>;
    if (row === 2 && col === 6) return <Cell key={col} $kind="total" $center>Totaal</Cell>;
    return <Cell key={col}>{log[row - 2][col]}</Cell>;
};

const Worksheet = () => (
    <SheetArea>
        <Canvas>
            <Grid>
                <colgroup>
                    <col width="25" />
                    <col width="70" />
                    {columns.slice(1).map(c => <col key={c} width="60" />)}
                    <col width="10" />
                </colgroup>
                <thead>
                    <tr>
                        <Corner />
                        {columns.map(c => <ColumnHead key={c} scope="col" $on={c === 'K'}>{c}</ColumnHead>)}
                        <ColumnHead />
                    </tr>
                </thead>
                <tbody>
                    {Array.from({ length: 26 }, (_, i) => i + 1).map(row => (
                        <tr key={row}>
                            <RowHead scope="row" $on={row === 21}>{row}</RowHead>
                            {columns.map((_, col) => cellFor(row, col))}
                            <Cell />
                        </tr>
                    ))}
                </tbody>
            </Grid>
            <PageBreak />
            <ChartBox><WeightChart /></ChartBox>
            <Selection />
            <Pointer />
            <PointerMark><PlusPointer /></PointerMark>
        </Canvas>
        <ScrollColumn>
            <SplitKnob />
            <ScrollButton aria-label="Omhoog"><Arrow /></ScrollButton>
            <ScrollThumb><Grip upright /></ScrollThumb>
            <ScrollButton aria-label="Omlaag"><Arrow turn={180} /></ScrollButton>
        </ScrollColumn>
    </SheetArea>
);

const Excel = () => (
    <Screen>
        <ExcelTitle>
            <QuickAccess>
                <QuickPill>
                    <SaveIcon />
                    <UndoIcon color="#3a6cd0" />
                    <Caret color="#cdd6df" />
                    <UndoIcon flip color="#a4afba" />
                    <Caret color="#e8edf2" />
                </QuickPill>
                <svg width="6" height="7" viewBox="0 0 6 7"><path d="M0 .5h6" stroke="#cdd6df" /><path d="M.5 3h5L3 6z" fill="none" stroke="#cdd6df" /></svg>
            </QuickAccess>
            <ExcelName>Gewicht - Microsoft Excel</ExcelName>
            <WindowKeys>
                <WindowKey $w={26} aria-label="Minimaliseren">
                    <svg width="10" height="4"><path d="M0 0h10v4H0z" fill="#fff" /></svg>
                </WindowKey>
                <WindowKey $w={21} aria-label="Vorig formaat">
                    <svg width="9" height="10" viewBox="0 0 9 10"><path d="M3 1h5v6M1 3h5v6H1z" fill="none" stroke="#e4e8ec" strokeWidth="2" /></svg>
                </WindowKey>
                <WindowKey $w={42} $close aria-label="Sluiten">
                    <svg width="10" height="9" viewBox="0 0 10 9"><path d="M1 0l8 9M9 0L1 9" stroke="#fff" strokeWidth="2.5" /></svg>
                </WindowKey>
            </WindowKeys>
        </ExcelTitle>
        <OfficeButton aria-label="Office-knop"><OfficeIcon /></OfficeButton>
        <TabStrip>
            {['Start', 'Invoegen', 'Pagina-indeling', 'Formules', 'Gegevens', 'Controleren', 'Beeld'].map((t, i) => (
                <RibbonTab key={t} $active={i === 0}>{t}</RibbonTab>
            ))}
            <TabTools>
                <button aria-label="Help"><HelpIcon /></button>
                <button aria-label="Venster minimaliseren"><svg width="9" height="9"><path d="M1 7h7v2H1z" fill="#6f7c90" /></svg></button>
                <button aria-label="Venster herstellen"><svg width="10" height="9"><path d="M3 1.5h6v5M1 3.5h6v4H1z" fill="none" stroke="#6f7c90" /></svg></button>
                <button aria-label="Venster sluiten"><svg width="9" height="9"><path d="M1 1l7 7M8 1L1 8" stroke="#6f7c90" strokeWidth="2" /></svg></button>
            </TabTools>
        </TabStrip>
        <ExcelRibbon />
        <FormulaBar>
            <NameBox>
                <input aria-label="Naamvak" defaultValue="K21" />
                <Caret color="#111" size={7} />
            </NameBox>
            <FxPill>
                <svg width="8" height="8"><circle cx="4" cy="4" r="3" fill="#d5dfec" stroke="#95a5bd" /></svg>
                <span>fx</span>
            </FxPill>
            <FormulaInput aria-label="Formule" />
            <ExpandButton aria-label="Formulebalk uitvouwen">
                <svg width="8" height="9" viewBox="0 0 8 9"><path d="M1 1l3 3 3-3M1 5l3 3 3-3" fill="none" stroke="#222" strokeWidth="1.5" /></svg>
            </ExpandButton>
        </FormulaBar>
        <Worksheet />
        <SheetBar>
            <SheetNav>
                <button aria-label="Eerste blad"><Arrow turn={-90} bar /></button>
                <button aria-label="Vorig blad"><Arrow turn={-90} /></button>
                <button aria-label="Volgend blad"><Arrow turn={90} /></button>
                <button aria-label="Laatste blad"><Arrow turn={90} bar /></button>
            </SheetNav>
            <SheetTab $w={67} $on>Edmond</SheetTab>
            <SheetTab $w={54}>Blad2</SheetTab>
            <SheetTab $w={54}>Blad3</SheetTab>
            <SheetTab $w={42} aria-label="Nieuw blad">
                <svg width="14" height="11" viewBox="0 0 14 11">
                    <path d="M4 2.5h9v6l-2 2H5z" fill="#eef3fb" stroke="#7b8fb2" />
                    <circle cx="3" cy="3" r="2.5" fill="#f0b04c" />
                </svg>
            </SheetTab>
            <HorizontalScroll>
                <SplitKnob $tall />
                <ScrollButton $flat aria-label="Naar links"><Arrow turn={-90} /></ScrollButton>
                <HorizontalThumb><Grip /></HorizontalThumb>
                <ScrollButton $flat aria-label="Naar rechts"><Arrow turn={90} /></ScrollButton>
                <SplitKnob $tall />
                <TrayGap $w={12} />
            </HorizontalScroll>
        </SheetBar>
        <StatusBar>
            <StatusText>Gereed</StatusText>
            <ViewKeys>
                <ViewKey $on aria-label="Normaal">
                    <svg width="12" height="10" viewBox="0 0 12 10"><path d="M.5.5h11v9H.5zM0 3.5h12M0 6.5h12M4.5 0v10M8.5 0v10" fill="#fff" stroke="#69707c" /></svg>
                </ViewKey>
                <ViewKey aria-label="Pagina-indeling">
                    <svg width="12" height="10" viewBox="0 0 12 10"><path d="M0 0h12v10H0z" fill="#848c99" /><path d="M3 1h6v8H3z" fill="#fff" /><path d="M5 3h3v4H5z" fill="#848c99" /></svg>
                </ViewKey>
                <ViewKey aria-label="Pagina-eindevoorbeeld">
                    <svg width="12" height="10" viewBox="0 0 12 10"><path d="M0 0h12v10H0z" fill="#848c99" /><path d="M1 0h4v6H1zM7 0h3v6H7z" fill="#fff" /></svg>
                </ViewKey>
            </ViewKeys>
            <span>100%</span>
            <TrayGap $w={6} />
            <IconButton $h={15} aria-label="Uitzoomen"><ZoomSign /></IconButton>
            <ZoomRange type="range" aria-label="Zoomen" defaultValue="50" />
            <IconButton $h={15} aria-label="Inzoomen"><ZoomSign plus /></IconButton>
        </StatusBar>
        <TaskBar>
            <QuickLaunch>
                <button aria-label="Bureaublad"><DesktopIcon /></button>
                <button aria-label="Vensters wisselen"><SwitchIcon /></button>
                <button aria-label="Excel"><ExcelIcon /></button>
                <button aria-label="Internet"><BrowserIcon /></button>
            </QuickLaunch>
            <TaskButton><ExcelIcon />Microsoft Excel - Ge...</TaskButton>
            <Tray>
                <span>NL</span>
                <svg width="15" height="13" viewBox="0 0 15 13"><rect x="0" y="5" width="15" height="8" rx="1" fill="#b5b8bb" /><path d="M2 7.5h11M2 10.5h11" stroke="#85898d" strokeDasharray="2 1" /><path d="M7 5q0-3 5-4" fill="none" stroke="#999" /></svg>
                <TrayGap $w={15} />
                <svg width="12" height="13" viewBox="0 0 12 13"><circle cx="6" cy="6.5" r="6" fill="#0fae20" /><path d="M5 3q-3 3.5 0 7" stroke="#6fe67a" strokeWidth="2" fill="none" /></svg>
                <svg width="12" height="13" viewBox="0 0 12 13"><path d="M0 1q6-2 12 0v6q-1 4-6 6-5-2-6-6z" fill="#c92330" stroke="#dcb3b6" /><path d="M3 3l6 6M9 3L3 9" stroke="#fff" strokeWidth="2" /></svg>
                <svg width="14" height="13" viewBox="0 0 14 13"><path d="M0 0h4v5l6-5h3L7 7l4 6H7L4 9v4H0z" fill="#ed1c24" /><path d="M8.5 7.5h5v5h-5z" fill="#111" stroke="#e5e5e5" /></svg>
                <TrayGap $w={2} />
                <svg width="13" height="12" viewBox="0 0 13 12"><rect x="4.5" y=".5" width="8" height="6" fill="#2b6cba" stroke="#dce6f0" /><rect x=".5" y="4.5" width="8" height="6" fill="#2358a0" stroke="#dce6f0" /></svg>
                <svg width="12" height="13" viewBox="0 0 12 13"><path d="M0 4h3l4-4v13L3 9H0z" fill="#f2f2f2" /><path d="M9 4q2 2.500 0 5" stroke="#6fd08a" fill="none" strokeWidth="1.5" /></svg>
                <Clock>20:51</Clock>
            </Tray>
        </TaskBar>
        <StartOrb aria-label="Start"><StartIcon /></StartOrb>
    </Screen>
);

export default function App() {
    return (
        <Shell>
            <GlobalStyle />
            <TitleBar>
                <AppIcon />
                <AppTitle>PC Home Professional computercursus Excel</AppTitle>
                <WindowButton aria-label="Minimaliseren">
                    <svg width="12" height="12"><path d="M0 5.5h12" stroke="#000" /></svg>
                </WindowButton>
                <WindowButton aria-label="Verkleinen">
                    <svg width="12" height="12"><path d="M.5 2.5h9v9h-9zM2.5 2.5v-2h9v9h-2" fill="none" stroke="#000" /></svg>
                </WindowButton>
                <WindowButton aria-label="Sluiten">
                    <svg width="12" height="12"><path d="M0 0l12 12M12 0L0 12" stroke="#000" /></svg>
                </WindowButton>
            </TitleBar>
            <Body>
                <Sidebar>
                    <SideGroup>
                        <SideButton><ContentsIcon />Inhoud</SideButton>
                        <SideButton><IndexIcon />Index</SideButton>
                    </SideGroup>
                    <SideGroup>
                        <SideButton><OptionsIcon />Opties</SideButton>
                        <SideButton><InfoIcon />Informatie</SideButton>
                    </SideGroup>
                </Sidebar>
                <Main>
                    <Toolbar>
                        <ToolGroup $start={11} $end={11}>
                            <ToolButton aria-label="Home"><HomeIcon /></ToolButton>
                        </ToolGroup>
                        <ToolGroup $start={12} $end={14}>
                            <ToolButton><PrevIcon />Vorige</ToolButton>
                            <ToolButton><NextIcon />Volgende</ToolButton>
                        </ToolGroup>
                    </Toolbar>
                    <Heading><span>Het Office-menu</span> - Opslaan als PDF</Heading>
                    <VideoBar>
                        <VideoTitle>Video</VideoTitle>
                        <IconButton $h={28} aria-label="Video sluiten"><CloseIcon /></IconButton>
                    </VideoBar>
                    <Stage>
                        <Excel />
                    </Stage>
                    <PlayerBar>
                        <IconButton $h={28} aria-label="Afspelen"><PlayIcon /></IconButton>
                        <IconButton $h={28} aria-label="Stoppen"><StopIcon /></IconButton>
                        <PlayerDivider />
                    </PlayerBar>
                </Main>
            </Body>
        </Shell>
    );
}
